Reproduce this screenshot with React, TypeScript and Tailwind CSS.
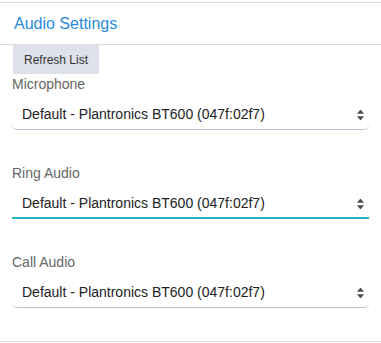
import { useState } from "react";

const DEVICE = "Default - Plantronics BT600 (047f:02f7)";

function Arrows() {
  return (
    <svg
      width="7"
      height="11"
      viewBox="0 0 7 11"
      className="pointer-events-none absolute right-[5px] top-1/2 -translate-y-1/2 text-[#4a4a4a]"
    >
      <path d="M0 4.2 L3.5 0 L7 4.2 Z" fill="currentColor" />
      <path d="M0 6.8 L7 6.8 L3.5 11 Z" fill="currentColor" />
    </svg>
  );
}

function DeviceSelect({ label, focused }: { label: string; focused?: boolean }) {
  const [value, setValue] = useState(DEVICE);
  return (
    <div>
      <label className="block text-[14px] leading-[17px] text-[#666] mb-[7px]">{label}</label>
      <div className="relative">
        <select
          value={value}
          onChange={(e) => setValue(e.target.value)}
          className={
            focused
              ? "appearance-none w-full h-[30px] pl-[10px] pr-6 bg-white text-[14px] text-[#222] outline-none border-b-2 border-[#2bb4c6]"
              : "appearance-none w-full h-[30px] pl-[10px] pr-6 bg-white text-[14px] text-[#222] outline-none border-b border-[#b9c2d2] rounded-[5px]"
          }
        >
          <option>{DEVICE}</option>
        </select>
        <Arrows />
      </div>
    </div>
  );
}

export default function App() {
  return (
    <div className="w-[381px] h-[343px] bg-white pt-[2px] font-['Liberation_Sans',Arial,sans-serif]">
      <div className="h-[340px] border-b border-[#dcdcdc]">
        {/* Header */}
        <div className="h-[43px] flex items-center pl-[14px] pt-[1px] border-t border-b border-[#dcdcdc]">
          <h2 className="text-[16px] leading-6 text-[#2a8bdc]">Audio Settings</h2>
        </div>

        <button className="ml-[13px] w-[86px] h-[29px] bg-[#dde1e9] text-[12px] text-[#333]">
          Refresh List
        </button>

        <div className="px-[12px] pt-[2px] flex flex-col gap-[35px]">
          <DeviceSelect label="Microphone" />
          <DeviceSelect label="Ring Audio" focused />
          <DeviceSelect label="Call Audio" />
        </div>
      </div>
    </div>
  );
}
